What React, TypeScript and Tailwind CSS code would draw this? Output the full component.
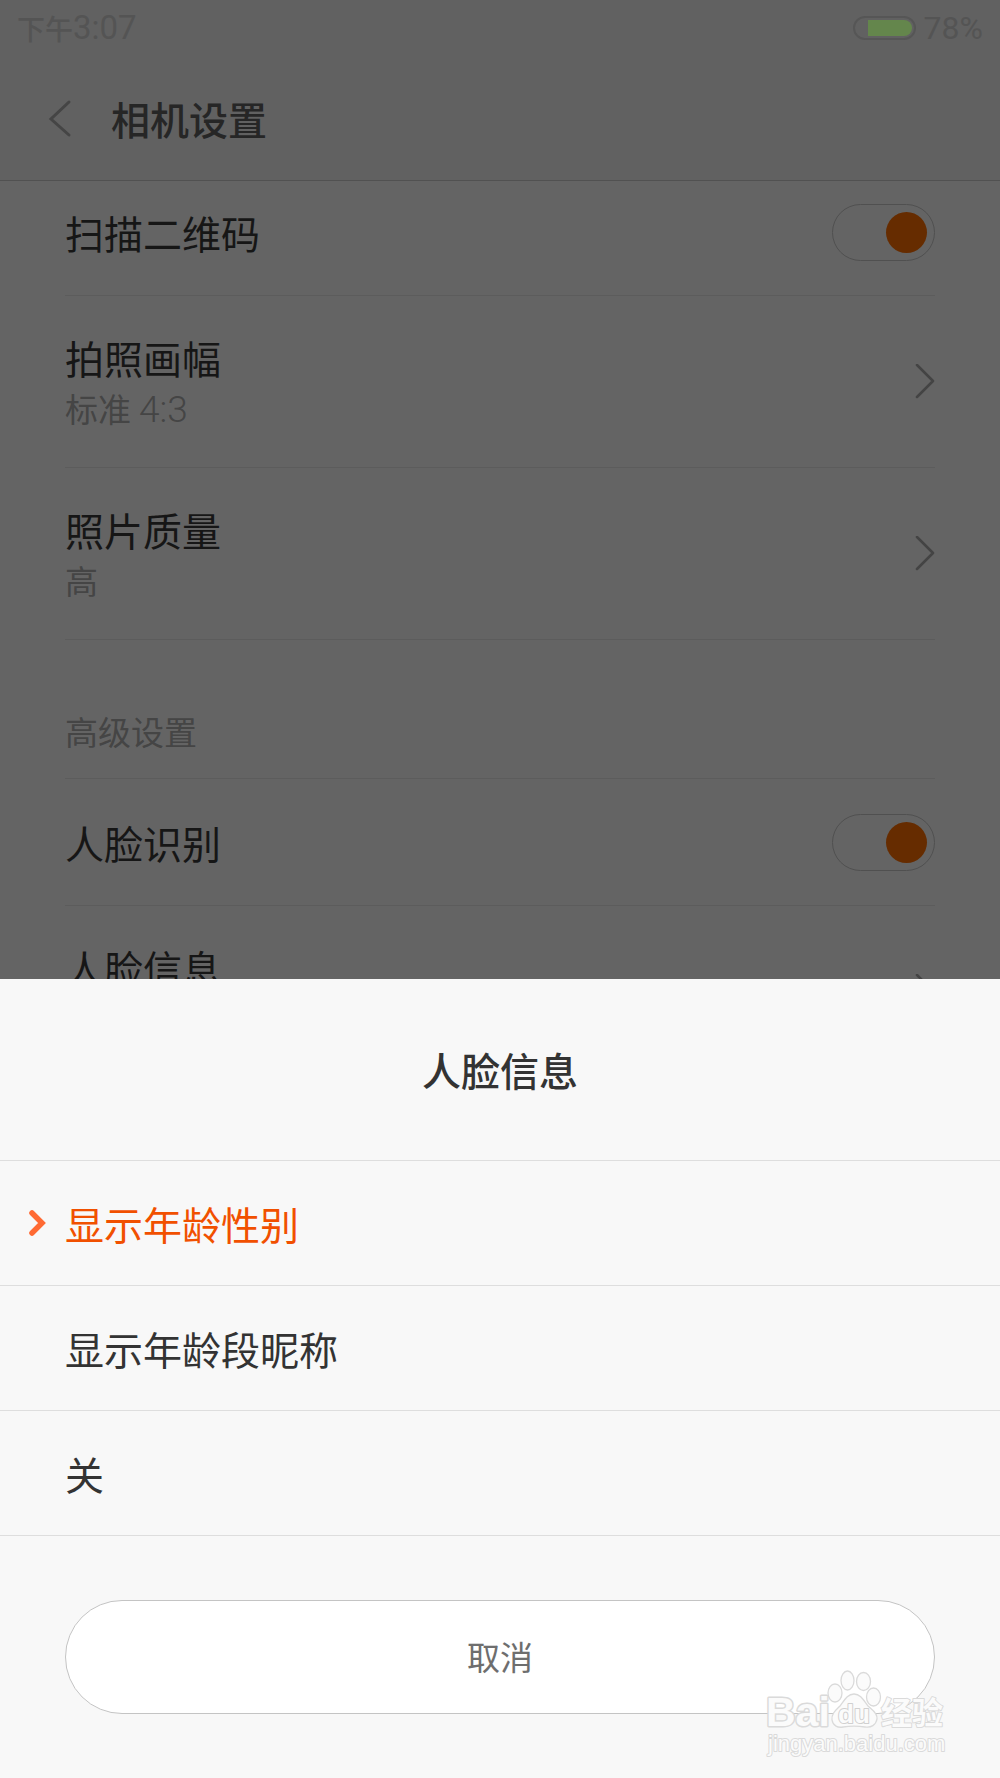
import { useState } from 'react'

type Row =
    | { kind: 'toggle'; title: string }
    | { kind: 'link'; title: string; value: string; ratio?: string }
    | { kind: 'section'; title: string }

const ROWS: Row[] = [
    { kind: 'toggle', title: '扫描二维码' },
    { kind: 'link', title: '拍照画幅', value: '标准', ratio: '4:3' },
    { kind: 'link', title: '照片质量', value: '高' },
    { kind: 'section', title: '高级设置' },
    { kind: 'toggle', title: '人脸识别' },
    { kind: 'link', title: '人脸信息', value: '显示年龄性别' },
]

const OPTIONS = ['显示年龄性别', '显示年龄段昵称', '关']

function Chevron() {
    return (
        <svg className="w-5 h-9 shrink-0" viewBox="0 0 20 36" fill="none" stroke="#444444" strokeWidth={2.5} strokeLinecap="round" strokeLinejoin="round">
            <path d="M2 1L18 17L2 33" />
        </svg>
    )
}

function StatusBar() {
    return (
        <div className="flex items-center justify-between h-14 px-[17px] text-[#545454]">
            <div className="flex items-center">
                <span className="text-[28px] leading-8 font-medium">下午</span>
                <span className="text-[33px] leading-8 font-['Roboto',sans-serif]">3:07</span>
            </div>
            <div className="flex items-center gap-2">
                <div className="flex justify-end w-[63px] h-6 p-[2px] rounded-full border-2 border-[#565656]">
                    <div className="w-11 h-full rounded-r-full bg-[#64864c]" />
                </div>
                <span className="text-[32px] leading-8 font-['Roboto',sans-serif]">78%</span>
            </div>
        </div>
    )
}

function ToggleRow({ title }: { title: string }) {
    const [on, setOn] = useState(true)
    return (
        <label className="flex items-center justify-between h-[127px] border-b border-[#5c5c5c]">
            <span className="text-[39px]">{title}</span>
            <input
                type="checkbox"
                role="switch"
                checked={on}
                onChange={() => setOn(!on)}
                className="appearance-none flex items-center justify-start checked:justify-end shrink-0 w-[103px] h-[57px] px-[7px] rounded-full border border-[#505050] before:content-[''] before:w-[41px] before:h-[41px] before:rounded-full before:bg-[#444444] checked:before:bg-[#662c00]"
            />
        </label>
    )
}

function LinkRow({ title, value, ratio }: { title: string; value: string; ratio?: string }) {
    return (
        <button className="flex items-center justify-between w-full h-[172px] text-left border-b border-[#5c5c5c]">
            <span className="flex flex-col">
                <span className="text-[39px] leading-[52px]">{title}</span>
                <span className="flex items-baseline gap-2 text-[33px] leading-[50px] text-[#454545]">
                    {value}
                    {ratio && <span className="text-[37px] leading-10 font-light font-['Roboto',sans-serif]">{ratio}</span>}
                </span>
            </span>
            <Chevron />
        </button>
    )
}

function Watermark() {
    return (
        <svg
            className="absolute right-0 bottom-0 w-[260px] h-[208px] pointer-events-none"
            viewBox="0 0 260 208"
            fill="#fbfbfb"
            stroke="#dadada"
            strokeWidth={2}
            strokeLinejoin="round"
            fontFamily="'Liberation Sans', 'Noto Sans CJK SC', sans-serif"
        >
            <text x="26" y="156" fontSize="41" fontWeight="700" paintOrder="stroke" strokeWidth={3}>Bai</text>
            <g strokeWidth={1.3}>
                <ellipse cx="95" cy="123" rx="7" ry="9" />
                <ellipse cx="107.5" cy="110.5" rx="6.5" ry="9.5" />
                <ellipse cx="123.5" cy="111.5" rx="7" ry="9" />
                <ellipse cx="133.5" cy="127" rx="7" ry="9" />
                <path d="M114 124C107 124 104 131 100 136C96 140 91 144 92 150C93 156 98 158 103 157C110 156 118 156 125 157C131 158 136 155 137 149C138 143 131 139 128 136C124 131 121 124 114 124Z" />
            </g>
            <text x="98" y="153" fontSize="26" fontWeight="700" paintOrder="stroke" stroke="#d0d0d0">du</text>
            <text x="141" y="154" fontSize="31" fontWeight="700" paintOrder="stroke">经验</text>
            <text x="28" y="181" fontSize="22" paintOrder="stroke">jingyan.baidu.com</text>
        </svg>
    )
}

export default function App() {
    const [selected, setSelected] = useState(OPTIONS[0])

    return (
        <div className="flex flex-col h-screen bg-[#646464] font-['Noto_Sans_CJK_SC',sans-serif] text-[#161616]">
            <div className="flex-1 min-h-0 flex flex-col">
                <header className="shrink-0 bg-[#616161] border-b border-[#515151]">
                    <StatusBar />
                    <div className="flex items-center gap-[39px] h-[124px] pl-12">
                        <button aria-label="返回">
                            <svg className="w-6 h-10" viewBox="0 0 24 40" fill="none" stroke="#454545" strokeWidth={3} strokeLinecap="round">
                                <path d="M21 4L3 21L21 37" />
                            </svg>
                        </button>
                        <h1 className="text-[39px] font-medium text-[#262626]">相机设置</h1>
                    </div>
                </header>

                <main className="flex-1 min-h-0 overflow-hidden px-[65px]">
                    {/* list is scrolled slightly under the header */}
                    <div className="-mt-3">
                        {ROWS.map((row) => {
                            if (row.kind === 'toggle') return <ToggleRow key={row.title} title={row.title} />
                            if (row.kind === 'link') return <LinkRow key={row.title} title={row.title} value={row.value} ratio={row.ratio} />
                            return (
                                <h2 key={row.title} className="flex items-end h-[139px] pb-[22px] text-[33px] text-[#454545] border-b border-[#5c5c5c]">
                                    {row.title}
                                </h2>
                            )
                        })}
                    </div>
                </main>
            </div>

            <section className="relative shrink-0 bg-[#f8f8f8] text-[#333333]">
                <h2 className="flex items-center justify-center h-[182px] text-[39px] font-medium border-b border-[#dedede]">人脸信息</h2>
                {OPTIONS.map((option) => (
                    <button
                        key={option}
                        onClick={() => setSelected(option)}
                        className={`flex items-center w-full h-[125px] pl-7 text-[39px] border-b border-[#dedede] ${option === selected ? 'text-[#f15000]' : ''}`}
                    >
                        <span className="w-[37px]">
                            {option === selected && (
                                <svg className="w-5 h-7" viewBox="0 0 20 28" fill="none" stroke="#ff6a33" strokeWidth={5.5} strokeLinecap="round" strokeLinejoin="miter">
                                    <path d="M4 4L14 14L4 24" />
                                </svg>
                            )}
                        </span>
                        {option}
                    </button>
                ))}
                <div className="px-[65px] py-16">
                    <button className="w-full h-[114px] rounded-full border border-[#c4c4c4] bg-white text-[33px] text-[#6e6e6e]">取消</button>
                </div>
                <Watermark />
            </section>
        </div>
    )
}
